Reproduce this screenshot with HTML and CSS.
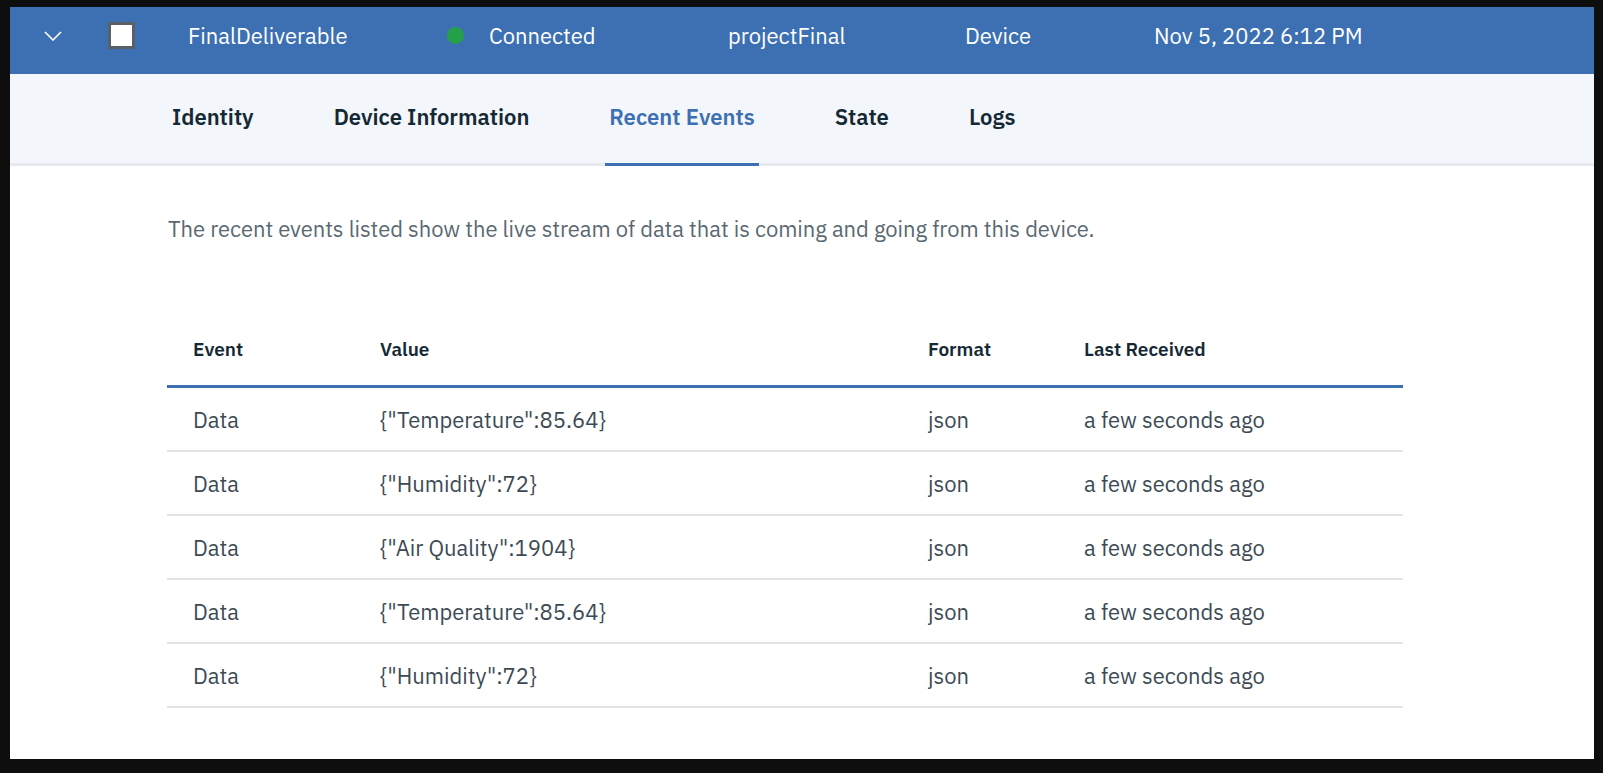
FILE: index.html
```html
<!DOCTYPE html>
<html lang="en">
<head>
<meta charset="utf-8">
<title>Device - Recent Events</title>
<link rel="stylesheet" href="styles.css">
</head>
<body>
<div class="frame">
  <div class="device-row">
    <div class="cell cell-chevron">
      <svg class="chevron" width="18" height="10" viewBox="0 0 18 10"><path d="M1 1 L9 9 L17 1" fill="none" stroke="#ffffff" stroke-width="1.6"/></svg>
    </div>
    <div class="cell cell-check"><span class="checkbox"></span></div>
    <div class="cell cell-name">FinalDeliverable</div>
    <div class="cell cell-status"><span class="dot"></span><span>Connected</span></div>
    <div class="cell cell-type">projectFinal</div>
    <div class="cell cell-class">Device</div>
    <div class="cell cell-date">Nov 5, 2022 6:12 PM</div>
  </div>
  <nav class="tabs">
    <div class="tab">Identity</div>
    <div class="tab">Device Information</div>
    <div class="tab active">Recent Events</div>
    <div class="tab">State</div>
    <div class="tab">Logs</div>
  </nav>
  <main class="content">
    <p class="description">The recent events listed show the live stream of data that is coming and going from this device.</p>
    <table class="events">
      <thead>
        <tr><th class="c-event">Event</th><th class="c-value">Value</th><th class="c-format">Format</th><th class="c-last">Last Received</th></tr>
      </thead>
      <tbody>
        <tr><td>Data</td><td>{"Temperature":85.64}</td><td>json</td><td>a few seconds ago</td></tr>
        <tr><td>Data</td><td>{"Humidity":72}</td><td>json</td><td>a few seconds ago</td></tr>
        <tr><td>Data</td><td>{"Air Quality":1904}</td><td>json</td><td>a few seconds ago</td></tr>
        <tr><td>Data</td><td>{"Temperature":85.64}</td><td>json</td><td>a few seconds ago</td></tr>
        <tr><td>Data</td><td>{"Humidity":72}</td><td>json</td><td>a few seconds ago</td></tr>
      </tbody>
    </table>
  </main>
</div>
</body>
</html>
```
FILE: styles.css
```css
html, body {
  margin: 0;
  padding: 0;
  background: #0e0e0e;
}
body {
  padding: 7px 9px 14px 10px;
  font-family: "IBM Plex Sans", Roboto, "Liberation Sans", sans-serif;
}
.frame {
  background: #ffffff;
  height: 752px;
  overflow: hidden;
}
.device-row {
  background: #3d70b2;
  height: 57px;
  padding-bottom: 10px;
  padding-left: 34px;
  display: flex;
  align-items: center;
  color: #ffffff;
  font-size: 22px;
}
.cell { display: flex; align-items: center; flex: none; }
.cell-chevron { width: 18px; }
.chevron { display: block; }
.cell-check { margin-left: 46px; width: 80px; }
.checkbox {
  width: 21px;
  height: 21px;
  background: #ffffff;
  border: 3px solid #5a6068;
  display: block;
}
.cell-name { width: 259px; }
.cell-status { width: 281px; }
.dot {
  width: 17px;
  height: 17px;
  border-radius: 50%;
  background: #24a148;
  margin-right: 25px;
}
.cell-type { width: 237px; }
.cell-class { width: 189px; }

.tabs {
  display: flex;
  gap: 72px;
  height: 89px;
  background: #f3f6fa;
  border-bottom: 3px solid #e6eaee;
  padding-left: 158px;
}
.tab {
  margin-bottom: -3px;
  border-bottom: 3px solid transparent;
  padding: 0 4px 5px;
  display: flex;
  align-items: center;
  font-size: 22px;
  font-weight: 600;
  color: #152935;
}
.tab.active {
  color: #3d70b2;
  border-bottom-color: #3d70b2;
}

.content {
  padding-left: 157px;
}
.description {
  margin: 51px 0 0 1px;
  font-size: 22px;
  line-height: 24px;
  letter-spacing: -0.05px;
  color: #5a6872;
}
.events {
  margin-top: 82px;
  width: 1236px;
  border-collapse: collapse;
  font-size: 22px;
  color: #3d4a55;
}
.events th {
  height: 52px;
  padding: 0 26px 10px;
  text-align: left;
  font-size: 19px;
  font-weight: 600;
  color: #152935;
  border-bottom: 3px solid #3d70b2;
  vertical-align: middle;
}
.c-event { width: 135px; }
.c-value { width: 496px; }
.c-format { width: 104px; }
.events td {
  height: 62px;
  padding: 0 26px;
  border-bottom: 2px solid #dfe3e6;
  vertical-align: middle;
}
```
